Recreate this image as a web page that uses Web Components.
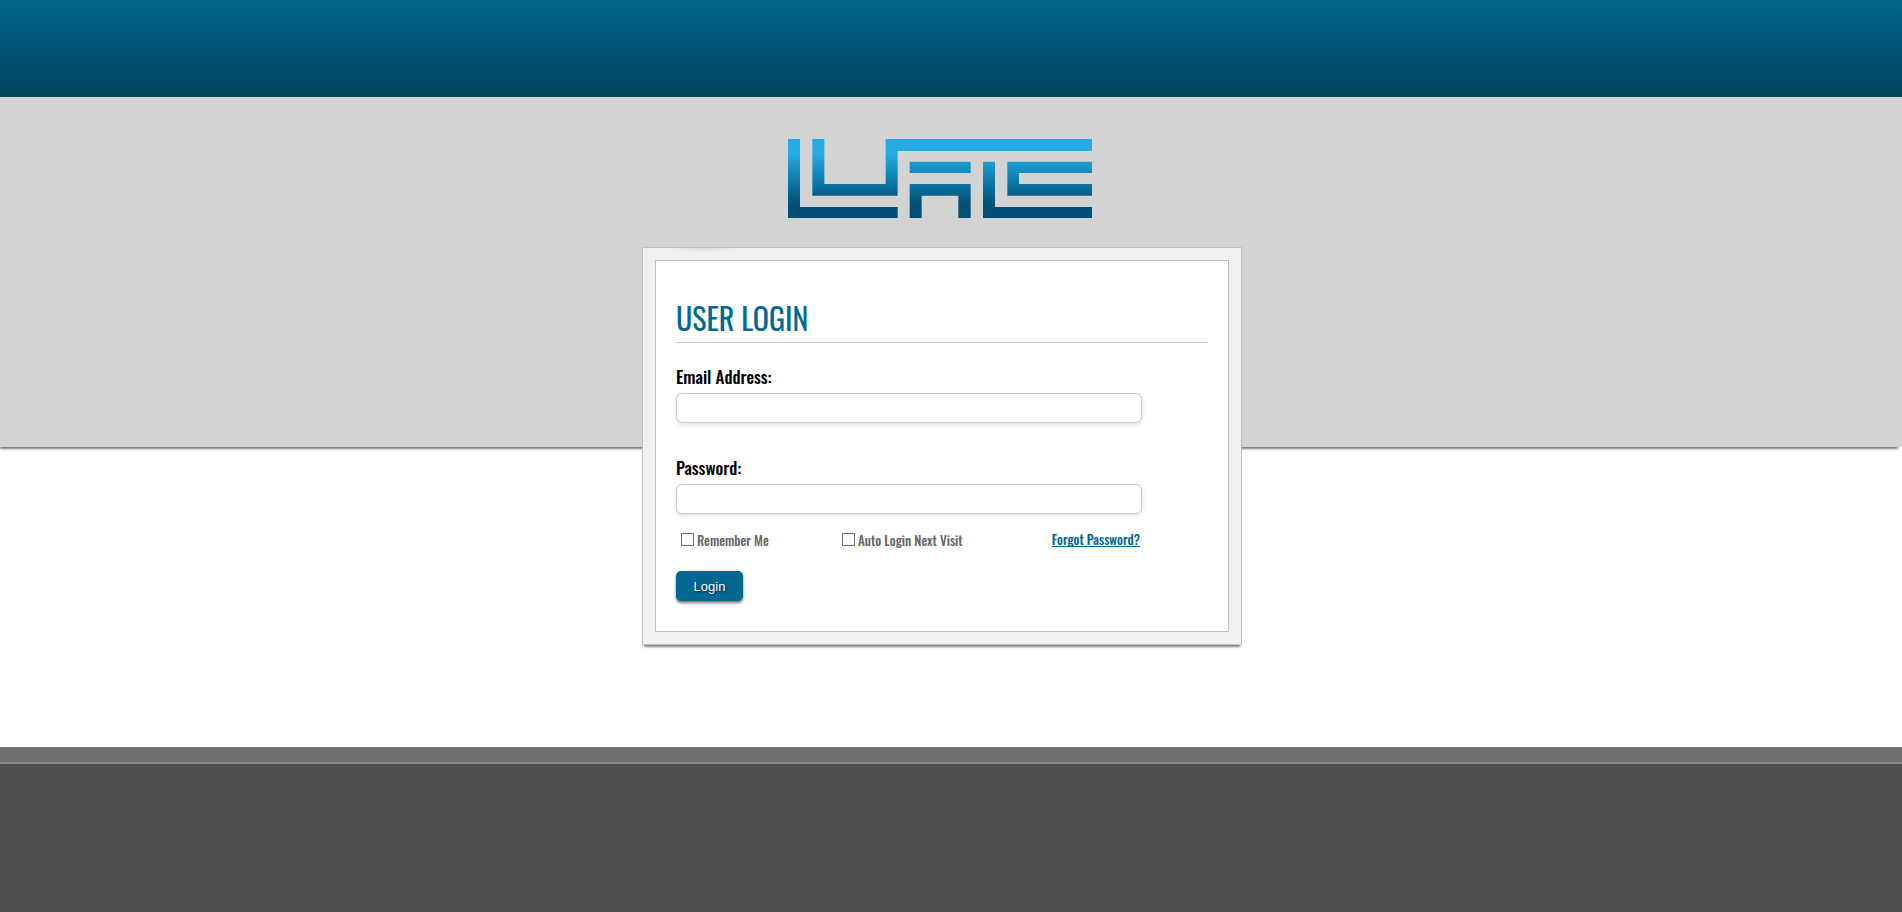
<!DOCTYPE html>
<html lang="en">
<head>
<meta charset="utf-8">
<title>User Login</title>
<style>
  html, body { margin: 0; min-height: 100%; background: #fff; }
  body { font-family: Oswald, "Liberation Sans Narrow", "Open Sans Condensed", "Roboto Condensed", "Liberation Sans", sans-serif; }
</style>
</head>
<body>
<login-page>
  <brand-logo slot="brand"></brand-logo>
  <login-card heading="USER LOGIN">
    <text-field label="Email Address:" type="email" name="email"></text-field>
    <text-field label="Password:" type="password" name="password"></text-field>
    <login-options></login-options>
    <action-button>Login</action-button>
  </login-card>
</login-page>

<script>
function define(name, html, setup) {
  const template = document.createElement('template');
  template.innerHTML = html;
  customElements.define(name, class extends HTMLElement {
    constructor() {
      super();
      this.attachShadow({ mode: 'open' }).append(template.content.cloneNode(true));
    }
    connectedCallback() {
      if (setup) setup(this, this.shadowRoot);
    }
  });
}

define('brand-logo', `
  <style>
    :host { display: block; width: 304px; }
    svg { display: block; width: 100%; height: auto; }
  </style>
  <svg viewBox="0 0 912 237" role="img" aria-label="Company logo">
    <defs>
      <linearGradient id="g" gradientUnits="userSpaceOnUse" x1="0" y1="0" x2="0" y2="237">
        <stop offset="0.2" stop-color="#25aae3"/>
        <stop offset="0.5" stop-color="#0e7fb0"/>
        <stop offset="0.83" stop-color="#004f74"/>
      </linearGradient>
    </defs>
    <g fill="url(#g)">
      <path d="M0 0H36V204H329V237H0z"/>
      <path d="M73 0H109V135H293V0H912V36H329V170H73z"/>
      <path d="M365 68H548V102H365z"/>
      <path d="M365 135H548V237H511V170H401V237H365z"/>
      <path d="M585 68H621V204H912V237H585z"/>
      <path d="M658 68H912V102H693V135H912V170H658z"/>
    </g>
  </svg>`);

define('text-field', `
  <style>
    :host { display: block; width: 466px; max-width: 100%; }
    label { display: block; font-size: 17px; font-weight: 460; line-height: 24px; margin-bottom: 4px; color: #000; }
    input { display: block; box-sizing: border-box; width: 100%; height: 30px; margin: 0; padding: 0 8px;
      border: 1px solid #c8c8c8; border-radius: 6px; background: #fff; box-shadow: 0 2px 5px rgba(0,0,0,.12);
      font: 14px "Liberation Sans", sans-serif; }
  </style>
  <label for="field"></label>
  <input id="field">`, (host, root) => {
    root.querySelector('label').textContent = host.getAttribute('label');
    const input = root.querySelector('input');
    input.type = host.getAttribute('type');
    input.name = host.getAttribute('name');
  });

define('check-option', `
  <style>
    :host { display: block; }
    label { display: flex; align-items: center; gap: 3px; font-size: 13px; line-height: 20px; font-weight: 475; color: #666; white-space: nowrap; }
    input { appearance: none; box-sizing: border-box; width: 13px; height: 13px; margin: 0; border: 1px solid #707070; background: #fff; }
    input:checked { background: #006891; box-shadow: inset 0 0 0 2px #fff; }
    span { line-height: 18px; padding-top: 2px; }
  </style>
  <label><input type="checkbox"><span><slot></slot></span></label>`);

define('login-options', `
  <style>
    :host { display: grid; grid-template-columns: 161px 1fr auto; align-items: center; width: 466px; max-width: 100%;
      box-sizing: border-box; padding: 0 2px 0 5px; }
    a { font-size: 13px; line-height: 20px; font-weight: 490; color: #00668e; text-decoration-skip-ink: none; }
  </style>
  <check-option>Remember Me</check-option>
  <check-option>Auto Login Next Visit</check-option>
  <a href="#forgot">Forgot Password?</a>`);

define('action-button', `
  <style>
    :host { display: block; }
    button { display: block; width: 67px; height: 30px; padding: 2px 0 0; border: 0; border-radius: 5px; background: #006891;
      color: #fff; font: 13px/28px "Liberation Sans", Arial, sans-serif; text-shadow: 1px 1px 2px rgba(0,0,0,.7);
      box-shadow: 0 2px 3px rgba(0,0,0,.55); cursor: pointer; }
  </style>
  <button type="submit"><slot></slot></button>`);

define('login-card', `
  <style>
    :host { display: block; box-sizing: border-box; width: 600px; max-width: 100%; padding: 12px; border: 1px solid #c0c0c0;
      background: radial-gradient(ellipse 36px 5px at 60px 0, #dcdcdc, #f0f0f0); box-shadow: 0 4px 2px -2px rgba(0,0,0,.5); }
    form { margin: 0; padding: 33px 20px 30px; border: 1px solid #c0c0c0; background: #fff; }
    h1 { margin: 0; border-bottom: 1px solid #ccc; color: #006891; font-size: 30px; line-height: 48px; font-weight: 400; }
    ::slotted(login-options) { margin-bottom: 22px; }
    ::slotted(text-field:nth-of-type(1)) { margin: 22px 0 33px; }
    ::slotted(text-field:nth-of-type(2)) { margin-bottom: 15px; }
  </style>
  <form><h1></h1><slot></slot></form>`, (host, root) => {
    root.querySelector('h1').textContent = host.getAttribute('heading');
  });

define('login-page', `
  <style>
    :host { display: grid; grid-template-rows: 97px 350px auto 1fr; grid-template-columns: minmax(0, 1fr); min-height: 100vh; }
    header { grid-area: 1 / 1; background: linear-gradient(#00668c, #00445e); }
    .band { grid-area: 2 / 1; background: #d3d3d3; box-shadow: -2px 4px 2px -2px rgba(0,0,0,.5); }
    main { grid-area: 2 / 1 / span 2; display: flex; flex-direction: column; align-items: center; gap: 29px;
      padding: 42px 18px 102px 0; z-index: 1; }
    ::slotted(brand-logo) { margin-right: 4px; }
    footer { grid-area: 4 / 1; min-height: 148px; border-top: 15px solid #707070; background: linear-gradient(#8a8a8a 2px, #505050 2px) padding-box; }
  </style>
  <header></header>
  <div class="band"></div>
  <main><slot name="brand"></slot><slot></slot></main>
  <footer></footer>`);
</script>
</body>
</html>
